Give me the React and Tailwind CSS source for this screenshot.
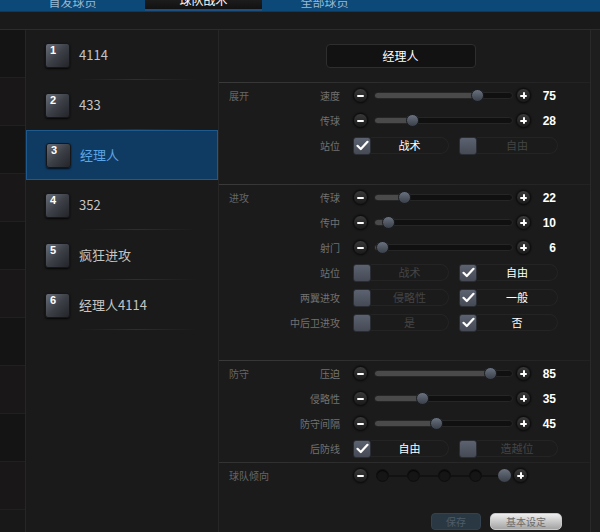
import React from 'react';

const cn = '"Noto Sans CJK SC", "Liberation Sans", sans-serif';

const teams = [
  { n: 1, name: '4114' },
  { n: 2, name: '433' },
  { n: 3, name: '经理人', active: true },
  { n: 4, name: '352' },
  { n: 5, name: '疯狂进攻' },
  { n: 6, name: '经理人4114' },
];

const RoundBtn = ({ plus }) => (
  <div className="w-[15px] h-[15px] rounded-full bg-gradient-to-b from-[#3a3a3a] to-[#1a1a1a] border border-[#0c0c0c] shadow-[0_0_2px_rgba(0,0,0,0.9)] flex items-center justify-center">
    <div className="relative w-[7px] h-[7px] flex items-center justify-center">
      <div className="w-[7px] h-[2px] bg-white rounded-[1px]" />
      {plus && <div className="absolute w-[2px] h-[7px] bg-white rounded-[1px]" />}
    </div>
  </div>
);

const Slider = ({ value }) => (
  <div className="flex items-center">
    <RoundBtn />
    <div className="ml-[6px] w-[139px] h-[7px] rounded-full bg-[#101010] border border-[#262626] flex items-center">
      <div className="h-[5px] rounded-full bg-[#4a4a4a] flex justify-end items-center" style={{ width: `${Math.max(value, 4)}%` }}>
        <div className="w-[13px] h-[13px] shrink-0 -mr-[6px] rounded-full bg-gradient-to-b from-[#6a7280] to-[#3a4048] border border-[#1a1d22]" />
      </div>
    </div>
    <div className="ml-[3px]"><RoundBtn plus /></div>
    <div className="w-[25px] text-right text-[12px] font-bold text-white" style={{ fontFamily: '"Liberation Sans", sans-serif' }}>{value}</div>
  </div>
);

const Box = ({ checked }) => (
  <div className="w-[18px] h-[18px] shrink-0 rounded-[3px] bg-gradient-to-b from-[#5c6270] to-[#454a55] border border-[#2a2d33] flex items-center justify-center">
    {checked && (
      <svg width="13" height="11" viewBox="0 0 13 11">
        <path d="M1.5 5.8 L4.8 9 L11.5 1.8" fill="none" stroke="white" strokeWidth="2.2" strokeLinecap="round" strokeLinejoin="round" />
      </svg>
    )}
  </div>
);

const Option = ({ checked, label, w }) => (
  <div className={`flex items-center ${w}`}>
    <Box checked={checked} />
    <div className="flex-1 h-[17px] rounded-r-full border border-l-0 border-[#242424] flex items-center justify-center">
      <span className={`text-[11px] ${checked ? 'text-white' : 'text-[#444]'}`}>{label}</span>
    </div>
  </div>
);

const Choice = ({ a, b, first }) => (
  <div className="flex items-center">
    <Option checked={first} label={a} w="w-[96px]" />
    <div className="ml-[10px]"><Option checked={!first} label={b} w="w-[99px]" /></div>
  </div>
);

const Row = ({ label, children }) => (
  <div className="h-[25px] flex items-center">
    <div className="w-[61px] text-right text-[10px] text-[#727272] whitespace-nowrap">{label}</div>
    <div className="ml-[13px]">{children}</div>
  </div>
);

const Section = ({ title, pb, children }) => (
  <div className={pb}>
    <div className="h-px bg-gradient-to-r from-[#3a3a3a] via-[#2a2a2a] to-[#222]" />
    <div className="flex">
      <div className="w-[60px] pl-[10px] h-[25px] flex items-center text-[10px] text-[#666]">{title}</div>
      <div className="flex flex-col">{children}</div>
    </div>
  </div>
);

const Tendency = () => (
  <div className="flex items-center">
    <RoundBtn />
    <div className="ml-[8px] h-[14px] flex items-center gap-[18px] relative">
      <div className="absolute left-[6px] right-[8px] h-[2px] bg-[#121212]" />
      {[0, 1, 2, 3].map((i) => (
        <div key={i} className="relative w-[13px] h-[13px] rounded-full bg-[#151515] border border-[#0e0e0e] shadow-[inset_0_1px_1px_rgba(0,0,0,0.8)]" />
      ))}
      <div className="relative -ml-[2px] w-[13px] h-[13px] rounded-full bg-gradient-to-b from-[#6a7280] to-[#3a4048]" />
    </div>
    <div className="ml-[2px]"><RoundBtn plus /></div>
  </div>
);

export default function App() {
  return (
    <div className="w-[600px] h-[532px] bg-[#181818] flex flex-col overflow-hidden" style={{ fontFamily: cn }}>
      {/* tab bar */}
      <div className="h-[12px] flex bg-[#0c4878] border-b border-[#0a3a60]">
        <div className="w-[145px] flex items-end justify-center overflow-hidden">
          <span className="text-[12px] leading-[18px] text-[#9ab8d0]">首发球员</span>
        </div>
        <div className="w-[117px] flex items-end justify-center overflow-hidden bg-gradient-to-b from-[#1c1c1c] to-[#121212] border-b-2 border-[#1d4f80]">
          <span className="text-[12px] leading-[18px] text-white">球队战术</span>
        </div>
        <div className="w-[125px] flex items-end justify-center overflow-hidden">
          <span className="text-[12px] leading-[18px] text-[#9ab8d0]">全部球员</span>
        </div>
        <div className="flex-1" />
      </div>

      <div className="h-[18px] bg-[#1a1a1a] border-b border-[#2c2c2c]" />

      <div className="flex-1 flex">
        {/* left strip */}
        <div className="w-[25px] flex flex-col">
          {[0, 1, 2, 3, 4, 5, 6, 7, 8, 9].map((i) => (
            <div key={i} className={`h-[48px] ${i % 2 ? 'bg-[#1a1718]' : 'bg-[#141414]'} border-b border-[#202020]`} />
          ))}
        </div>

        {/* team list */}
        <div className="w-[194px] flex flex-col bg-[#1a1a1a] border-x border-[#262626] pb-[26px]">
          {teams.map((t) => (
            <div
              key={t.n}
              className={`h-[50px] flex items-center pl-[19px] relative ${t.active ? 'bg-[#0f3b63] border border-[#1e5a8e]' : ''}`}
            >
              <div className="w-[25px] h-[25px] rounded-[3px] bg-gradient-to-br from-[#6a6e78] via-[#3c3f46] to-[#23252a] border border-[#15161a] shadow-[0_1px_2px_rgba(0,0,0,0.8)]">
                <span className="block pl-[4px] leading-[12px] text-[11px] font-bold text-white" style={{ fontFamily: '"Liberation Sans", sans-serif' }}>{t.n}</span>
              </div>
              <span className={`ml-[9px] text-[13px] ${t.active ? 'text-[#5ca4e4]' : 'text-[#c4c4c4]'}`}>{t.name}</span>
              {!t.active && <div className="absolute bottom-0 left-[50px] w-[120px] h-px bg-gradient-to-r from-transparent via-[#2e2e2e] to-transparent" />}
            </div>
          ))}
          <div className="flex-1" />
        </div>

        {/* settings panel */}
        <div className="flex-1 flex flex-col bg-[#1b1b1b]">
          <div className="pt-[14px] pb-[14px] flex justify-center pr-[8px]">
            <div className="w-[150px] h-[24px] rounded-[4px] bg-[#121212] border border-[#2e2e2e] flex items-center justify-center text-[12px] text-white">
              经理人
            </div>
          </div>

          <Section title="展开" pb="pb-[26px]">
            <Row label="速度"><Slider value={75} /></Row>
            <Row label="传球"><Slider value={28} /></Row>
            <Row label="站位"><Choice a="战术" b="自由" first /></Row>
          </Section>

          <Section title="进攻" pb="pb-[25px]">
            <Row label="传球"><Slider value={22} /></Row>
            <Row label="传中"><Slider value={10} /></Row>
            <Row label="射门"><Slider value={6} /></Row>
            <Row label="站位"><Choice a="战术" b="自由" /></Row>
            <Row label="两翼进攻"><Choice a="侵略性" b="一般" /></Row>
            <Row label="中后卫进攻"><Choice a="是" b="否" /></Row>
          </Section>

          <Section title="防守" pb="pb-[1px]">
            <Row label="压迫"><Slider value={85} /></Row>
            <Row label="侵略性"><Slider value={35} /></Row>
            <Row label="防守间隔"><Slider value={45} /></Row>
            <Row label="后防线"><Choice a="自由" b="造越位" first /></Row>
          </Section>

          <div className="h-px bg-gradient-to-r from-[#333] to-[#222]" />
          <div className="h-[25px] flex items-center">
            <div className="w-[134px] pl-[10px] text-[10px] text-[#666]">球队倾向</div>
            <Tendency />
          </div>

          <div className="flex-1 flex items-end justify-end pb-[2px] pr-[28px] gap-[9px]">
            <div className="w-[50px] h-[17px] rounded-[4px] bg-[#2a3844] border border-[#33424e] flex items-center justify-center text-[10px] text-[#4e5c68]">保存</div>
            <div className="w-[72px] h-[17px] rounded-[5px] bg-gradient-to-b from-[#eeeeee] to-[#a4a4a4] border border-[#c8c8c8] flex items-center justify-center text-[10px] text-[#6a6a6a]">基本设定</div>
          </div>
        </div>

        {/* right strip */}
        <div className="w-[10px] bg-[#1e1e1e] border-l border-[#2a2a2a]" />
      </div>
    </div>
  );
}
